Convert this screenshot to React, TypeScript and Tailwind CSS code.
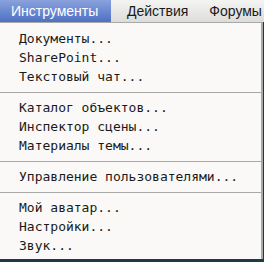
const GROUPS = [
  ['Документы...', 'SharePoint...', 'Текстовый чат...'],
  ['Каталог объектов...', 'Инспектор сцены...', 'Материалы темы...'],
  ['Управление пользователями...'],
  ['Мой аватар...', 'Настройки...', 'Звук...'],
];

export default function App() {
  return (
    <div className="w-[264px] h-[262px] bg-[#1d3a4a] overflow-hidden">
      <div className="flex h-[22px] bg-gradient-to-b from-[#f4f4f3] to-[#dcdcda] text-[14px] font-['Liberation_Sans',sans-serif]">
        <div className="w-[111px] shrink-0 pl-[11px] leading-[22px] text-white bg-gradient-to-b from-[#8aa2dc] to-[#4f70c4]">Инструменты</div>
        <div className="pl-[16px] leading-[22px] text-[#1a1a1a]">Действия</div>
        <div className="pl-[21px] leading-[22px] text-[#1a1a1a]">Форумы</div>
      </div>
      <div className="w-[263px] h-[237px] bg-[#faf9f7] border-t border-r-2 border-[#a8a8a6] font-['DejaVu_Sans_Mono',monospace] text-[13px] text-[#1a1a1a] pt-[6px]">
        {GROUPS.map((g, gi) => (
          <div key={gi} className={gi > 0 ? 'border-t border-[#a8a8a6] pt-[5px] pb-[6px]' : 'pb-[6px]'}>
            {g.map(item => (
              <div key={item} className="h-[19px] leading-[19px] pl-[19px]">{item}</div>
            ))}
          </div>
        ))}
      </div>
    </div>
  );
}
